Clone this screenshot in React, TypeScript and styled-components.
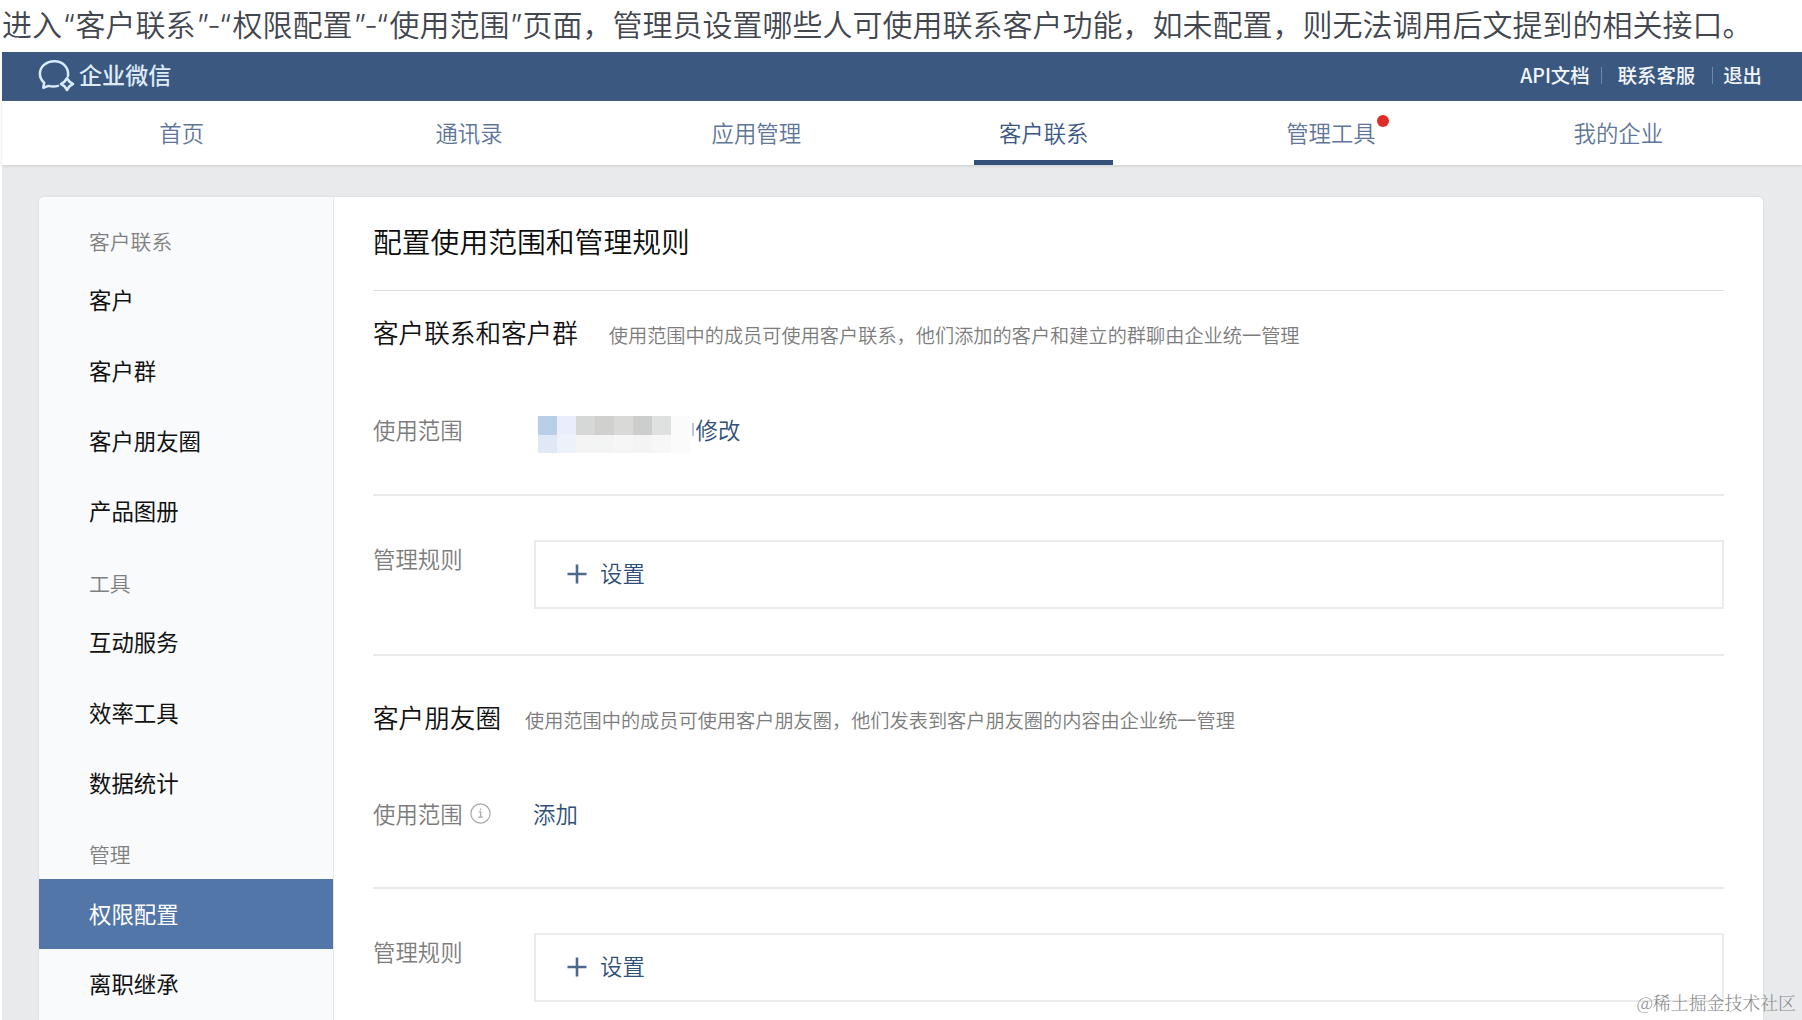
import React from "react";
import styled, { createGlobalStyle } from "styled-components";

const GlobalStyle = createGlobalStyle`
  * { box-sizing: border-box; }
  html, body { margin: 0; padding: 0; background: #fff; overflow: hidden; }
  body { font-family: "Noto Sans CJK SC", "Liberation Sans", sans-serif; font-weight: 350; }
`;

const Page = styled.div`
  width: 1802px;
  height: 1020px;
  overflow: hidden;
  display: flex;
  flex-direction: column;
  position: relative;
`;

const Caption = styled.p`
  margin: 0;
  height: 52px;
  padding-left: 2px;
  font-size: 30px;
  line-height: 47px;
  color: #42464e;
  white-space: nowrap;
`;

const Quote = styled.span<{ $width: number }>`
  display: inline-block;
  width: ${(p) => p.$width}px;
  font-family: Inter, sans-serif;
  text-align: center;
`;

const Shot = styled.div`
  margin-left: 2px;
  flex: 1;
  min-height: 0;
  display: flex;
  flex-direction: column;
  background: #e8eaeb;
`;

const TopBar = styled.header`
  flex: none;
  height: 49px;
  padding: 0 40px 0 35px;
  display: flex;
  align-items: center;
  justify-content: space-between;
  background: #3b5980;
  border-bottom: 1px solid #49617a;
  color: #f2f6fc;
`;

const Brand = styled.div`
  display: flex;
  align-items: center;
  gap: 3px;
  font-size: 23.1px;
  font-weight: 500;
  line-height: 45px;
  padding-bottom: 3px;
  color: #dfebf8;
`;

const TopLinks = styled.div`
  display: flex;
  align-items: center;
  font-size: 19.4px;
  font-weight: 500;
  line-height: 46px;
  padding-bottom: 2px;
`;

const Separator = styled.i<{ $before: number; $after: number }>`
  width: 1px;
  height: 17px;
  margin: 0 ${(p) => p.$after}px 0 ${(p) => p.$before}px;
  background: #7089a9;
`;

const Nav = styled.nav`
  flex: none;
  height: 64px;
  padding: 0 40px 0 36px;
  display: grid;
  grid-template-columns: repeat(6, 1fr);
  justify-items: center;
  background: #fff;
  box-shadow: 0 1px 3px rgba(0, 0, 0, 0.12);
`;

const NavItem = styled.a<{ $active?: boolean }>`
  position: relative;
  height: 64px;
  width: 139px;
  text-align: center;
  font-size: 22.4px;
  line-height: 62px;
  color: ${(p) => (p.$active ? "#3a5682" : "#5f7699")};
  border-bottom: 5px solid ${(p) => (p.$active ? "#35517a" : "transparent")};
`;

const Dot = styled.span`
  position: absolute;
  top: 14px;
  right: 11px;
  width: 12px;
  height: 12px;
  border-radius: 50%;
  background: #e02c26;
`;

const Card = styled.div`
  flex: 1;
  min-height: 0;
  margin: 32px 39px 0 37px;
  display: flex;
  background: #fff;
  border-radius: 5px 5px 0 0;
  box-shadow: 0 0 3px rgba(0, 0, 0, 0.08);
  overflow: hidden;
`;

const Sidebar = styled.aside`
  flex: none;
  width: 294.5px;
  padding-top: 8px;
  background: #f9fafc;
  border-right: 1px solid #e4e8ec;
`;

const GroupTitle = styled.div`
  height: 60.4px;
  padding: 12px 0 0 50px;
  font-size: 20.8px;
  line-height: 48px;
  color: #7f7f7f;
`;

const SideItem = styled.a<{ $active?: boolean }>`
  display: block;
  height: 70.35px;
  padding-left: 50px;
  font-size: 22.4px;
  font-weight: 400;
  line-height: 68px;
  color: ${(p) => (p.$active ? "#fff" : "#111")};
  background: ${(p) => (p.$active ? "#5276a8" : "transparent")};
`;

const Main = styled.main`
  flex: 1;
  padding: 0 39px 0 39.5px;
`;

const Title = styled.h1`
  margin: 0;
  height: 94px;
  border-bottom: 1px solid #dedede;
  font-size: 28.8px;
  font-weight: 350;
  line-height: 88px;
  color: #0c0c0c;
`;

const SectionHead = styled.div<{ $top: number; $gap: number }>`
  display: flex;
  align-items: center;
  gap: ${(p) => p.$gap}px;
  height: ${(p) => p.$top + 40}px;
  padding-top: ${(p) => p.$top}px;
`;

const SectionTitle = styled.h2`
  margin: 0;
  padding-bottom: 4px;
  font-size: 25.6px;
  font-weight: 350;
  line-height: 36px;
  color: #111;
`;

const Hint = styled.span`
  padding-top: 3px;
  font-size: 19.2px;
  line-height: 37px;
  color: #7c7c7c;
`;

const ScopeRow = styled.div<{ $height: number; $top: number }>`
  display: flex;
  align-items: flex-start;
  height: ${(p) => p.$height}px;
  padding-top: ${(p) => p.$top}px;
  border-bottom: 2px solid #e9e9e9;
`;

const RuleRow = styled.div<{ $last?: boolean }>`
  display: flex;
  align-items: flex-start;
  height: 160px;
  padding-top: 44px;
  border-bottom: ${(p) => (p.$last ? "0" : "2px solid #e9e9e9")};
`;

const Label = styled.div`
  flex: none;
  width: 160.5px;
  display: flex;
  align-items: center;
  gap: 7px;
  font-size: 22.4px;
  line-height: 36px;
  color: #7c7c7c;
`;

const Link = styled.a`
  margin-left: -0.5px;
  font-size: 22.4px;
  line-height: 36px;
  color: #2f5078;
`;

const Masked = styled.div`
  display: grid;
  grid-template-columns: repeat(8, 19px);
  grid-template-rows: 19px 18px;
  margin: 5px 0 0 4.5px;
`;

const Tile = styled.span<{ $color: string }>`
  background: ${(p) => p.$color};
`;

const MaskEdge = styled.span`
  width: 2px;
  height: 13px;
  margin: 12px 2px 0 2px;
  background: #b9c6d8;
`;

const RuleBox = styled.div`
  flex: 1;
  height: 69px;
  padding: 0 0 2px 31px;
  display: flex;
  align-items: center;
  gap: 14px;
  border: 2px solid #ebebeb;
`;

const RuleLink = styled(Link)`
  padding-bottom: 3px;
`;

const Watermark = styled.div`
  position: absolute;
  right: 6px;
  bottom: 4px;
  font-family: "Noto Serif CJK SC", "Noto Sans CJK SC", serif;
  font-size: 17.9px;
  line-height: 28px;
  color: #8a8a8a;
`;

const Logo = () => (
  <svg width="39" height="34" viewBox="0 0 39 34" fill="none" stroke="#d9ebff" strokeWidth="2.5" strokeLinejoin="round" strokeLinecap="round">
    <path d="M31 18C32 10.5 26.5 3.2 17.5 3.2C9 3.2 2.9 8.8 2.9 15.7C2.9 19.4 4.5 22.4 7.2 24.6L6.3 29.8L11.5 27.9C14.5 28.6 18 28.6 21 27.9" />
    <path d="M30 20.2L32.4 23.6L36 26L32.4 28.4L30 32L27.6 28.4L24 26L27.6 23.6Z" strokeWidth="2.6" />
  </svg>
);

const Plus = () => (
  <svg width="20" height="20" viewBox="0 0 20 20" stroke="#4d698e" strokeWidth="2.6">
    <path d="M10 0.5V19.5M0.5 10H19.5" />
  </svg>
);

const Info = () => (
  <svg width="21" height="21" viewBox="0 0 21 21" fill="none" stroke="#a9a9a9" strokeWidth="1.2">
    <circle cx="10.5" cy="10.5" r="9.6" />
    <path d="M8.7 8.8H10.7V14M8.3 14.2H13M10.5 5.6V7.2" />
  </svg>
);

const navItems = ["首页", "通讯录", "应用管理", "客户联系", "管理工具", "我的企业"];

const groups = [
  { title: "客户联系", items: ["客户", "客户群", "客户朋友圈", "产品图册"] },
  { title: "工具", items: ["互动服务", "效率工具", "数据统计"] },
  { title: "管理", items: ["权限配置", "离职继承"] },
];

const tiles = [
  "#b9cee8", "#e9eefa", "#d6d8d7", "#d0d1cf", "#d9dad7", "#cccecd", "#dfe1e1", "#fbfbfb",
  "#dfe8f4", "#edf2fa", "#f4f4f5", "#f3f4f4", "#f6f6f6", "#f4f4f4", "#f7f7f7", "#fbfbfb",
];

const Rule = ({ last }: { last?: boolean }) => (
  <RuleRow $last={last}>
    <Label>管理规则</Label>
    <RuleBox>
      <Plus />
      <RuleLink>设置</RuleLink>
    </RuleBox>
  </RuleRow>
);

export default function App() {
  return (
    <Page>
      <GlobalStyle />
      <Caption>
        进入<Quote $width={13.5}>“</Quote>客户联系<Quote $width={37}>”-“</Quote>权限配置
        <Quote $width={37}>”-“</Quote>使用范围<Quote $width={13}>”</Quote>
        页面，管理员设置哪些人可使用联系客户功能，如未配置，则无法调用后文提到的相关接口。
      </Caption>
      <Shot>
        <TopBar>
          <Brand>
            <Logo />
            企业微信
          </Brand>
          <TopLinks>
            <span>API文档</span>
            <Separator $before={11} $after={16} />
            <span>联系客服</span>
            <Separator $before={17} $after={10} />
            <span>退出</span>
          </TopLinks>
        </TopBar>
        <Nav>
          {navItems.map((name) => (
            <NavItem key={name} $active={name === "客户联系"}>
              {name}
              {name === "管理工具" && <Dot />}
            </NavItem>
          ))}
        </Nav>
        <Card>
          <Sidebar>
            {groups.map((group) => (
              <React.Fragment key={group.title}>
                <GroupTitle>{group.title}</GroupTitle>
                {group.items.map((item) => (
                  <SideItem key={item} $active={item === "权限配置"}>
                    {item}
                  </SideItem>
                ))}
              </React.Fragment>
            ))}
          </Sidebar>
          <Main>
            <Title>配置使用范围和管理规则</Title>
            <SectionHead $top={23} $gap={31}>
              <SectionTitle>客户联系和客户群</SectionTitle>
              <Hint>使用范围中的成员可使用客户联系，他们添加的客户和建立的群聊由企业统一管理</Hint>
            </SectionHead>
            <ScopeRow $height={142} $top={57}>
              <Label>使用范围</Label>
              <Masked>
                {tiles.map((color, i) => (
                  <Tile key={i} $color={color} />
                ))}
              </Masked>
              <MaskEdge />
              <Link>修改</Link>
            </ScopeRow>
            <Rule />
            <SectionHead $top={43} $gap={24}>
              <SectionTitle>客户朋友圈</SectionTitle>
              <Hint>使用范围中的成员可使用客户朋友圈，他们发表到客户朋友圈的内容由企业统一管理</Hint>
            </SectionHead>
            <ScopeRow $height={150} $top={56}>
              <Label>
                使用范围
                <Info />
              </Label>
              <Link>添加</Link>
            </ScopeRow>
            <Rule last />
          </Main>
        </Card>
      </Shot>
      <Watermark>@稀土掘金技术社区</Watermark>
    </Page>
  );
}
